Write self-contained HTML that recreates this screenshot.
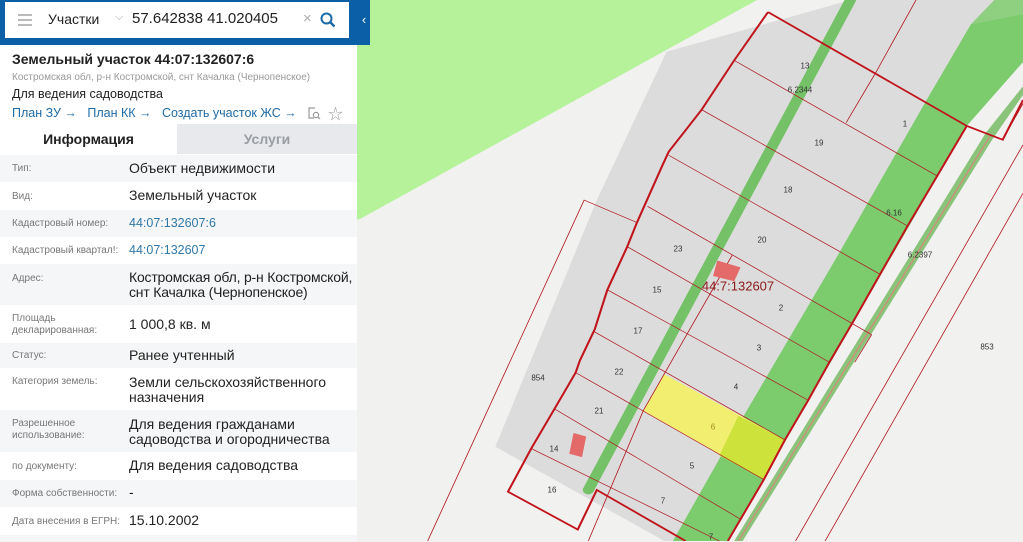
<!DOCTYPE html>
<html><head><meta charset="utf-8"><style>
*{margin:0;padding:0;box-sizing:border-box}
body{width:1023px;height:541px;overflow:hidden;position:relative;font-family:"Liberation Sans","Noto Sans CJK SC",sans-serif;background:#f1f1ef}
#map{position:absolute;left:0;top:0;width:1023px;height:541px}
.lbl{position:absolute;font-size:8px;color:#333;transform:translate(-50%,-50%);white-space:nowrap}
#panel{position:absolute;left:0;top:0;width:357px;height:541px;background:#fff}
#top{position:absolute;left:0;top:0;width:370px;height:45px;background:#0a5fa6}
#search{position:absolute;left:5px;top:2px;width:344px;height:36px;background:#fff}
.row{position:absolute;left:0;width:357px;font-size:14px;color:#222}
.row .k{position:absolute;left:12px;font-size:10px;color:#777;line-height:12px}
.row .v{position:absolute;left:129px;line-height:15px;white-space:nowrap}
.g{background:#f5f6f7}
a{color:#1f6aa5;text-decoration:none}
</style></head><body>
<svg id="map" viewBox="0 0 1023 541">
<rect x="0" y="0" width="1023" height="541" fill="#f1f1ef"/>
<polygon points="0,0 757,0 360,219 0,300" fill="#b5f29a"/>
</svg>
<svg style="position:absolute;left:360px;top:0;width:663px;height:541px" viewBox="0 0 1568 1568" preserveAspectRatio="none">
<polygon points="725,150 1160,0 1480,0 1230,800 1000,1280 850,1568 720,1568 320,1295 560,580" fill="#dcdcdc"/>
<polygon points="1470,0 1568,0 1568,40 1445,70 1380,200 1340,290" fill="#dcdcdc"/>
<polygon points="1500,0 1568,0 1568,40 1445,70" fill="#8fd080"/>
<polygon points="1445,70 1568,40 1568,180 1435,365 870,1568 740,1568 910,1200 1130,740 1340,290" fill="#7ccb6d"/>
<polygon points="1480,385 1568,250 1568,275 1495,405 905,1568 885,1568" fill="#8ac47a"/>
<line x1="1490" y1="395" x2="895" y2="1568" stroke="#d58a7a" stroke-width="3"/>
<polyline points="1160,0 540,1420" stroke="#75c168" stroke-width="26" stroke-linecap="round" fill="none"/>
<polygon points="720,1085 1005,1275 955,1390 670,1190" fill="#f2ef70"/>
<polygon points="895,1205 1005,1275 955,1390 850,1320" fill="#cde23a"/>
<g stroke="#b01820" stroke-width="2" fill="none">
<line x1="885" y1="175" x2="1365" y2="510"/><line x1="808" y1="318" x2="1295" y2="655"/>
<line x1="730" y1="450" x2="1230" y2="795"/><line x1="680" y1="598" x2="1210" y2="970"/>
<line x1="632" y1="715" x2="1110" y2="1050"/><line x1="585" y1="840" x2="1060" y2="1160"/>
<line x1="555" y1="962" x2="1005" y2="1275"/><line x1="510" y1="1080" x2="955" y2="1390"/>
<line x1="460" y1="1185" x2="900" y2="1505"/><line x1="405" y1="1300" x2="850" y2="1568"/>
<polyline points="880,740 670,1190 540,1568"/>
<polyline points="1315,0 1220,210 1150,355"/>
<polyline points="1520,405 1568,300"/>
<polyline points="655,645 530,580 160,1568"/>
<line x1="1568" y1="420" x2="1030" y2="1568"/>
<line x1="1568" y1="560" x2="1100" y2="1568"/>
<line x1="1210" y1="970" x2="1170" y2="1050"/>
</g>
<g stroke="#c0141c" stroke-width="5" fill="none">
<polyline points="965,35 1435,365 1520,405 1568,290"/>
<polyline points="965,35 885,175 808,318 730,440 715,480 655,645 632,715 585,840 555,955 520,1045 510,1080 460,1185 405,1300 350,1425 515,1535 560,1420 770,1568"/>
<polyline points="1435,365 1365,510 1295,655 1230,795 1165,935 1110,1050 1060,1160 1005,1275 955,1390 900,1505 870,1568"/>
</g>
<polygon points="845,755 900,775 885,815 835,800" fill="#e46a6a"/>
<polygon points="505,1255 535,1265 525,1325 495,1315" fill="#e46a6a"/>
</svg>
<div class="lbl" style="left:805px;top:66px">13</div>
<div class="lbl" style="left:800px;top:90px">6.2344</div>
<div class="lbl" style="left:905px;top:124px">1</div>
<div class="lbl" style="left:819px;top:143px">19</div>
<div class="lbl" style="left:788px;top:190px">18</div>
<div class="lbl" style="left:894px;top:213px">6.16</div>
<div class="lbl" style="left:762px;top:240px">20</div>
<div class="lbl" style="left:920px;top:255px">6.2397</div>
<div class="lbl" style="left:678px;top:249px">23</div>
<div class="lbl" style="left:738px;top:286px;font-size:13px;color:#8a1a1a">44:7:132607</div>
<div class="lbl" style="left:657px;top:290px">15</div>
<div class="lbl" style="left:781px;top:308px">2</div>
<div class="lbl" style="left:638px;top:331px">17</div>
<div class="lbl" style="left:759px;top:348px">3</div>
<div class="lbl" style="left:987px;top:347px">853</div>
<div class="lbl" style="left:619px;top:372px">22</div>
<div class="lbl" style="left:538px;top:378px">854</div>
<div class="lbl" style="left:736px;top:387px">4</div>
<div class="lbl" style="left:599px;top:411px">21</div>
<div class="lbl" style="left:713px;top:427px;color:#a08a20">6</div>
<div class="lbl" style="left:554px;top:449px">14</div>
<div class="lbl" style="left:692px;top:466px">5</div>
<div class="lbl" style="left:552px;top:490px">16</div>
<div class="lbl" style="left:663px;top:501px">7</div>
<div class="lbl" style="left:711px;top:537px">7</div>
<div id="top"></div>
<div style="position:absolute;left:358px;top:0;width:12px;height:45px;background:#0a5fa6;color:#fff;font-size:13px;text-align:center;line-height:40px">‹</div>
<div id="search">
<div style="position:absolute;left:13px;top:12px;width:14px;height:2px;background:#bbb;box-shadow:0 5px 0 #bbb,0 10px 0 #bbb"></div>
<div style="position:absolute;left:43px;top:9px;font-size:14px;color:#222">Участки</div>
<div style="position:absolute;left:110px;top:9px;font-size:11px;color:#aaa">⌵</div>
<div style="position:absolute;left:127px;top:8px;font-size:15px;color:#222">57.642838 41.020405</div>
<div style="position:absolute;left:298px;top:8px;font-size:15px;color:#aaa">×</div>
<svg style="position:absolute;left:315px;top:10px" width="16" height="16" viewBox="0 0 16 16"><circle cx="6.5" cy="6.5" r="5" stroke="#1a6aa8" stroke-width="2" fill="none"/><line x1="10" y1="10" x2="14.5" y2="14.5" stroke="#1a6aa8" stroke-width="2.4"/></svg>
</div>
<div id="panel" style="top:45px;height:496px">
<div style="position:absolute;left:12px;top:6px;font-size:14px;font-weight:bold;color:#222">Земельный участок 44:07:132607:6</div>
<div style="position:absolute;left:12px;top:27px;font-size:10px;color:#999">Костромская обл, р-н Костромской, снт Качалка (Чернопенское)</div>
<div style="position:absolute;left:12px;top:42px;font-size:12.5px;color:#222">Для ведения садоводства</div>
<div style="position:absolute;left:12px;top:61px;font-size:12.5px;white-space:nowrap"><a>План ЗУ →</a>&nbsp;&nbsp;&nbsp;<a>План КК →</a>&nbsp;&nbsp;&nbsp;<a>Создать участок ЖС →</a></div>
<svg style="position:absolute;left:307px;top:61px" width="14" height="14" viewBox="0 0 14 14"><path d="M8 2H2v10h5" stroke="#999" stroke-width="1.2" fill="none"/><circle cx="9" cy="9" r="2.6" stroke="#999" stroke-width="1.2" fill="none"/><line x1="11" y1="11" x2="13" y2="13" stroke="#999" stroke-width="1.2"/></svg>
<div style="position:absolute;left:328px;top:58px;font-size:15px;color:#999">☆</div>
<div style="position:absolute;left:0;top:79px;width:177px;height:30px;font-size:14px;font-weight:bold;text-align:center;line-height:30px;color:#222">Информация</div>
<div style="position:absolute;left:177px;top:79px;width:180px;height:30px;background:#e7e9ec;font-size:14px;font-weight:bold;text-align:center;line-height:30px;color:#9a9ea3">Услуги</div>
</div>
<div class="row g" style="top:155px;height:27px"><span class="k" style="top:8px">Тип:</span><span class="v" style="top:6px">Объект недвижимости</span></div>
<div class="row" style="top:182px;height:28px"><span class="k" style="top:9px">Вид:</span><span class="v" style="top:6px">Земельный участок</span></div>
<div class="row g" style="top:210px;height:27px"><span class="k" style="top:8px">Кадастровый номер:</span><span class="v" style="top:6px;font-size:12.5px;color:#2f78a8">44:07:132607:6</span></div>
<div class="row" style="top:237px;height:27px"><span class="k" style="top:8px">Кадастровый квартал!:</span><span class="v" style="top:6px;font-size:12.5px;color:#2f78a8">44:07:132607</span></div>
<div class="row g" style="top:264px;height:41px"><span class="k" style="top:9px">Адрес:</span><span class="v" style="top:6px;letter-spacing:-0.2px">Костромская обл, р-н Костромской,<br>снт Качалка (Чернопенское)</span></div>
<div class="row" style="top:305px;height:38px"><span class="k" style="top:8px">Площадь<br>декларированная:</span><span class="v" style="top:12px">1 000,8 кв. м</span></div>
<div class="row g" style="top:343px;height:25px"><span class="k" style="top:7px">Статус:</span><span class="v" style="top:5px">Ранее учтенный</span></div>
<div class="row" style="top:368px;height:42px"><span class="k" style="top:8px">Категория земель:</span><span class="v" style="top:7px">Земли сельскохозяйственного<br>назначения</span></div>
<div class="row g" style="top:410px;height:42px"><span class="k" style="top:8px">Разрешенное<br>использование:</span><span class="v" style="top:7px">Для ведения гражданами<br>садоводства и огородничества</span></div>
<div class="row" style="top:452px;height:28px"><span class="k" style="top:9px">по документу:</span><span class="v" style="top:6px">Для ведения садоводства</span></div>
<div class="row g" style="top:480px;height:27px"><span class="k" style="top:8px">Форма собственности:</span><span class="v" style="top:5px">-</span></div>
<div class="row" style="top:507px;height:28px"><span class="k" style="top:9px">Дата внесения в ЕГРН:</span><span class="v" style="top:6px">15.10.2002</span></div>
<div class="row g" style="top:535px;height:6px"></div>
</body></html>
